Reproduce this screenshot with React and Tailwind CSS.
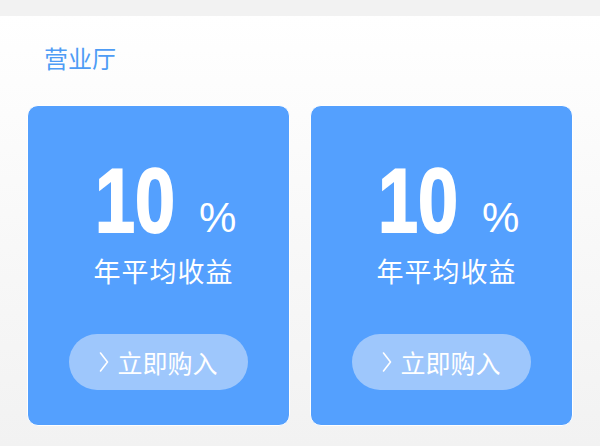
import React from "react";

const cjk = { fontFamily: '"Noto Sans CJK SC", "Noto Sans", sans-serif' };

const Card = () => (
  <div className="w-[263px] h-[321px] rounded-[11px] bg-[#54a0fe] border border-white flex flex-col items-center">
    {/* rate */}
    <div className="mt-[50px] pl-[14px] flex items-baseline text-white font-['Liberation_Sans',sans-serif]">
      <span className="inline-block text-[90px] leading-none font-bold scale-x-[0.8] origin-left mr-[-20px] [-webkit-text-stroke:2px_white]">10</span>
      <span className="ml-[24px] text-[42px] leading-none">%</span>
    </div>
    <div className="mt-[11px] pl-[10px] text-white text-[27px] leading-none tracking-[1px]" style={cjk}>
      年平均收益
    </div>
    {/* buy button */}
    <button className="mt-[50px] w-[179px] h-[56px] rounded-full bg-[#9ec7fc] flex items-center justify-center gap-[8px] text-white">
      <svg width="10" height="22" viewBox="0 0 10 22" fill="none">
        <path d="M1.5 2 L8.5 11 L1.5 20" stroke="white" strokeWidth="1.6" strokeLinejoin="round" strokeLinecap="round" />
      </svg>
      <span className="text-[25px] leading-none" style={cjk}>立即购入</span>
    </button>
  </div>
);

const App = () => {
  return (
    <div className="w-[600px] h-[446px] bg-[#f2f2f2] overflow-hidden">
      <div className="h-4" />
      <div className="h-[430px] bg-gradient-to-b from-white to-[#f2f2f2] px-[27px]">
        <div className="pt-[30px] pl-[17px] text-[24px] leading-[24px] text-[#4e9cf5]" style={cjk}>
          营业厅
        </div>
        <div className="mt-[35px] flex gap-[20px]">
          <Card />
          <Card />
        </div>
      </div>
    </div>
  );
};

export default App;
